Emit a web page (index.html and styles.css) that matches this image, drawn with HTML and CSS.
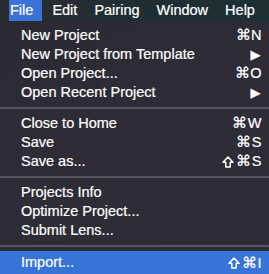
FILE: index.html
```html
<!DOCTYPE html>
<html lang="en">
<head>
  <meta charset="UTF-8">
  <meta name="viewport" content="width=device-width, initial-scale=1.0">
  <title>File menu</title>
  <link rel="stylesheet" href="styles.css">
</head>
<body>
  <div class="menubar">
    <span class="menu-title active">File</span>
    <span class="menu-title">Edit</span>
    <span class="menu-title">Pairing</span>
    <span class="menu-title">Window</span>
    <span class="menu-title">Help</span>
  </div>
  <div class="menu">
    <div class="item"><span>New Project</span><span class="key">⌘N</span></div>
    <div class="item"><span>New Project from Template</span><span class="key arrow">▶</span></div>
    <div class="item"><span>Open Project...</span><span class="key">⌘O</span></div>
    <div class="item"><span>Open Recent Project</span><span class="key arrow">▶</span></div>
    <div class="sep"></div>
    <div class="item"><span>Close to Home</span><span class="key">⌘W</span></div>
    <div class="item"><span>Save</span><span class="key">⌘S</span></div>
    <div class="item"><span>Save as...</span><span class="key"><svg class="shift" viewBox="0 0 12 12"><path d="M6 1 L11 6.2 H8.2 V11 H3.8 V6.2 H1 Z"/></svg>⌘S</span></div>
    <div class="sep"></div>
    <div class="item"><span>Projects Info</span></div>
    <div class="item"><span>Optimize Project...</span></div>
    <div class="item"><span>Submit Lens...</span></div>
    <div class="sep"></div>
    <div class="item selected"><span>Import...</span><span class="key"><svg class="shift" viewBox="0 0 12 12"><path d="M6 1 L11 6.2 H8.2 V11 H3.8 V6.2 H1 Z"/></svg>⌘I</span></div>
  </div>
</body>
</html>
```

FILE: styles.css
```css
body { margin: 0; width: 269px; height: 274px; overflow: hidden; font-family: 'Liberation Sans', Arial, sans-serif; font-size: 14.5px; color: #fff; -webkit-text-stroke: 0.2px #fff; background: linear-gradient(160deg, #2a2a31 0%, #2f2c37 50%, #2b2d33 100%); }
.menubar { height: 21px; display: flex; padding-left: 9px; background: linear-gradient(90deg, #2a2c30 0%, #1f2e33 60%, #1d3034 100%); }
.menu-title { line-height: 21px; padding: 0 7px 0 10px; }
.menu-title.active { background: #3a73d6; padding: 0 9px 0 1px; }
.menu { padding-top: 5px; }
.item { display: flex; justify-content: space-between; height: 19px; line-height: 19px; padding: 0 7px 0 21px; }
.key { display: flex; align-items: center; letter-spacing: 0.5px; }
.shift { width: 12px; height: 12px; margin-right: 2px; fill: none; stroke: #fff; stroke-width: 1.5; stroke-linejoin: round; }
.arrow { font-family: 'DejaVu Sans', sans-serif; font-size: 13px; padding-right: 1px; }
.sep { height: 2px; margin: 5px 0; background: #55555c; }
.selected { background: #3874d8; height: 23px; line-height: 22px; margin-top: -1px; }
```
